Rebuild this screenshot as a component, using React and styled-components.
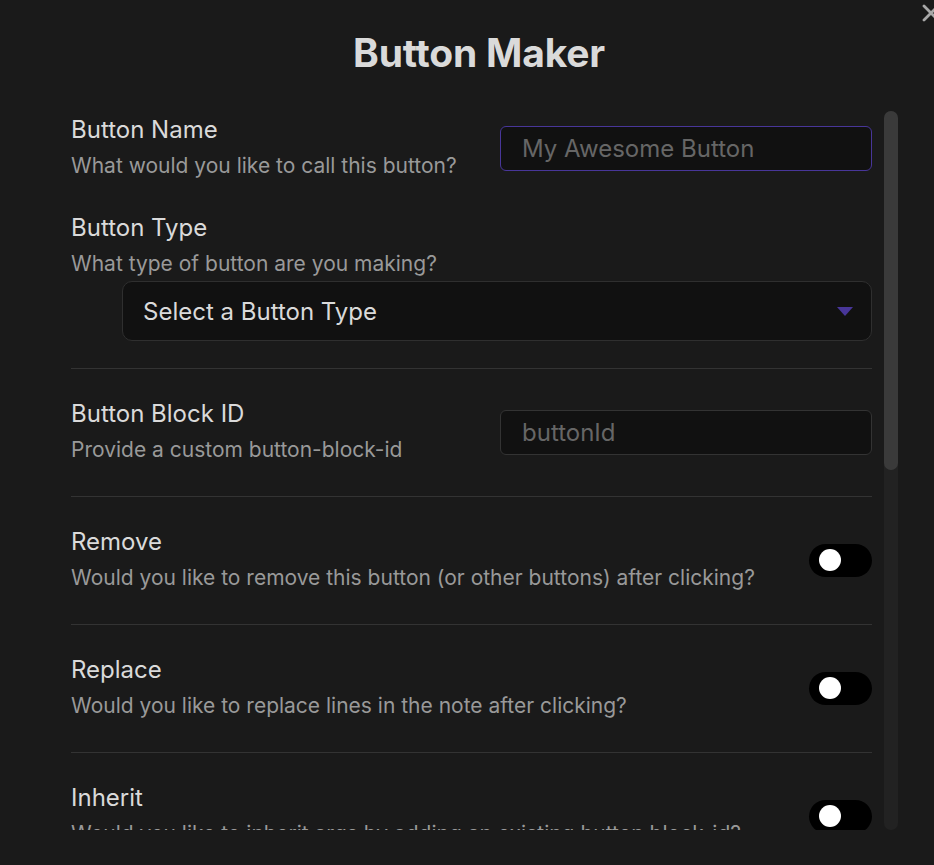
import React from 'react';
import styled, { createGlobalStyle } from 'styled-components';

const GlobalStyle = createGlobalStyle`
  html, body {
    margin: 0;
    padding: 0;
    background: #1a1a1a;
  }
  body {
    font-family: Inter, "Noto Sans", sans-serif;
    color: #dadada;
    overflow: hidden;
  }
  * {
    box-sizing: border-box;
  }
`;

const Modal = styled.div`
  position: relative;
  width: 934px;
  height: 865px;
  background: #1a1a1a;
  overflow: hidden;
`;

const CloseButton = styled.button`
  position: absolute;
  top: 2px;
  right: -8px;
  width: 22px;
  height: 22px;
  padding: 0;
  border: none;
  background: transparent;
  color: #a8a8a8;
  display: flex;
  align-items: center;
  justify-content: center;
`;

const Title = styled.h1`
  margin: 0;
  padding: 29px 0 0 24px;
  height: 110px;
  text-align: center;
  font-size: 39px;
  font-weight: 700;
  line-height: 48px;
  letter-spacing: -0.005em;
  color: #dadada;
`;

const Body = styled.div`
  display: flex;
  gap: 12px;
  margin-left: 71px;
  height: 720px;
`;

const Content = styled.div`
  width: 801px;
  height: 720px;
  overflow: hidden;
`;

const ScrollTrack = styled.div`
  width: 14px;
  height: 719px;
  margin-top: 1px;
  border-radius: 7px;
  background: #222222;
`;

const ScrollThumb = styled.div`
  height: 359px;
  border-radius: 7px;
  background: #3a3a3a;
`;

const Item = styled.div`
  display: flex;
  align-items: center;
  gap: 24px;
  padding: ${p => p.$pad || '31px 0 32px'};
  border-top: ${p => (p.$first ? 'none' : '1px solid #333333')};
`;

const ItemStack = styled.div`
  padding: 17px 0 27px;
`;

const Info = styled.div`
  flex: 1;
  min-width: 0;
`;

const Name = styled.div`
  font-size: 24px;
  line-height: 28px;
  color: #dadada;
`;

const Desc = styled.div`
  margin-top: 8px;
  font-size: 21px;
  line-height: 28px;
  color: #999999;
  white-space: nowrap;
`;

const TextInput = styled.input`
  width: 372px;
  height: 45px;
  flex-shrink: 0;
  padding: 0 21px;
  border: 1px solid ${p => (p.$focused ? '#483699' : '#333333')};
  border-radius: 6px;
  background: #111111;
  color: #dadada;
  font-family: Inter, "Noto Sans", sans-serif;
  font-size: 24px;
  outline: none;

  &::placeholder {
    color: #666666;
  }
`;

const Select = styled.div`
  display: flex;
  align-items: center;
  justify-content: space-between;
  margin: 3px 0 0 51px;
  height: 60px;
  padding: 0 18px 0 20px;
  border: 1px solid #2f2f2f;
  border-radius: 10px;
  background: #111111;
  color: #dadada;
  font-size: 24px;
`;

const Caret = styled.span`
  width: 0;
  height: 0;
  border-left: 8px solid transparent;
  border-right: 8px solid transparent;
  border-top: 9px solid #483699;
`;

const Toggle = styled.div`
  position: relative;
  flex-shrink: 0;
  width: 63px;
  height: 33px;
  border-radius: 17px;
  background: #000000;

  &::after {
    content: '';
    position: absolute;
    left: 10px;
    top: 5.5px;
    width: 22px;
    height: 22px;
    border-radius: 50%;
    background: #ffffff;
  }
`;

const TOGGLES = [
  {
    name: 'Remove',
    desc: 'Would you like to remove this button (or other buttons) after clicking?',
  },
  {
    name: 'Replace',
    desc: 'Would you like to replace lines in the note after clicking?',
  },
  {
    name: 'Inherit',
    desc: 'Would you like to inherit args by adding an existing button block-id?',
  },
];

export default function App() {
  return (
    <Modal>
      <GlobalStyle />
      <CloseButton aria-label="Close">
        <svg width="20" height="20" viewBox="0 0 20 20" fill="none">
          <path
            d="M3 3L17 17M17 3L3 17"
            stroke="currentColor"
            strokeWidth="2.8"
            strokeLinecap="round"
          />
        </svg>
      </CloseButton>

      <Title>Button Maker</Title>

      <Body>
        <Content>
          <Item $first $pad="6px 0 17px">
            <Info>
              <Name>Button Name</Name>
              <Desc>What would you like to call this button?</Desc>
            </Info>
            <TextInput $focused placeholder="My Awesome Button" />
          </Item>

          <ItemStack>
            <Name>Button Type</Name>
            <Desc>What type of button are you making?</Desc>
            <Select>
              <span>Select a Button Type</span>
              <Caret />
            </Select>
          </ItemStack>

          <Item>
            <Info>
              <Name>Button Block ID</Name>
              <Desc>Provide a custom button-block-id</Desc>
            </Info>
            <TextInput placeholder="buttonId" />
          </Item>

          {TOGGLES.map(t => (
            <Item key={t.name}>
              <Info>
                <Name>{t.name}</Name>
                <Desc>{t.desc}</Desc>
              </Info>
              <Toggle />
            </Item>
          ))}
        </Content>

        <ScrollTrack>
          <ScrollThumb />
        </ScrollTrack>
      </Body>
    </Modal>
  );
}
